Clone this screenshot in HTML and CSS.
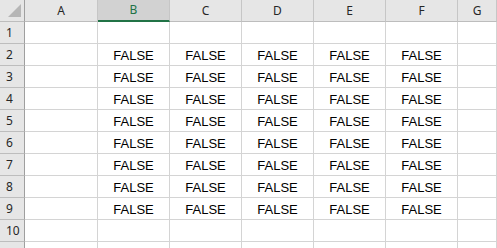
FILE: index.html
```html
<!DOCTYPE html>
<html lang="en">
<head>
    <meta charset="UTF-8">
    <title>Sheet1</title>
    <link rel="stylesheet" href="styles.css">
</head>
<body>
    <div class="sheet">
        <div class="corner">
            <svg class="corner-mark" viewBox="0 0 13 13"><polygon points="13,0 13,13 0,13"/></svg>
        </div>
        <div class="col-head">A</div>
        <div class="col-head selected">B</div>
        <div class="col-head">C</div>
        <div class="col-head">D</div>
        <div class="col-head">E</div>
        <div class="col-head">F</div>
        <div class="col-head">G</div>
    </div>
    <div class="sheet" id="rows"></div>

    <script>
        const rows = document.getElementById('rows');
        let html = '';
        // row 11 only peeks in at the bottom edge, so no label for it
        for (let r = 1; r <= 11; r++) {
            html += `<div class="row-head">${r <= 10 ? r : ''}</div><div class="cell"></div>`;
            for (let c = 0; c < 5; c++) {
                const val = (r >= 2 && r <= 9) ? 'FALSE' : '';
                html += `<div class="cell bool">${val}</div>`;
            }
            html += `<div class="cell"></div>`;
        }
        rows.innerHTML = html;
    </script>
</body>
</html>
```

FILE: styles.css
```css
body {
    margin: 0;
    background: #ffffff;
    overflow: hidden;
    height: 248px;
}
.sheet {
    display: grid;
    grid-template-columns: 25px 73px 72px 72px 72px 72px 72px 1fr;
    grid-auto-rows: 22px;
    width: 497px;
}
.corner {
    background-color: #e6e6e6;
    border-right: 1px solid #9f9f9f;
    border-bottom: 1px solid #bdbdbd;
    box-sizing: border-box;
    position: relative;
}
.corner-mark {
    position: absolute;
    right: 3px;
    bottom: 4px;
    width: 13px;
    height: 13px;
    fill: #b6b6b6;
}
.col-head {
    background-color: #e6e6e6;
    border-right: 1px solid #c6c6c6;
    border-bottom: 1px solid #bdbdbd;
    box-sizing: border-box;
    display: flex;
    align-items: center;
    justify-content: center;
    font-family: "Noto Sans", sans-serif;
    font-size: 12px;
    color: #262626;
    padding-bottom: 1px;
}
.col-head.selected {
    background-color: #d2d2d2;
    border-bottom: 2px solid #217346;
    color: #217346;
}
.row-head {
    background-color: #e6e6e6;
    border-right: 1px solid #9f9f9f;
    border-bottom: 1px solid #bdbdbd;
    box-sizing: border-box;
    display: flex;
    align-items: center;
    padding-left: 6px;
    font-family: "Noto Sans", sans-serif;
    font-size: 12px;
    color: #262626;
}
.cell {
    border-right: 1px solid #d4d4d4;
    border-bottom: 1px solid #d4d4d4;
    box-sizing: border-box;
}
.bool {
    display: flex;
    align-items: flex-end;
    justify-content: center;
    padding-bottom: 2px;
    font-family: "Liberation Sans", sans-serif;
    font-size: 13px;
    color: #000000;
}
```
